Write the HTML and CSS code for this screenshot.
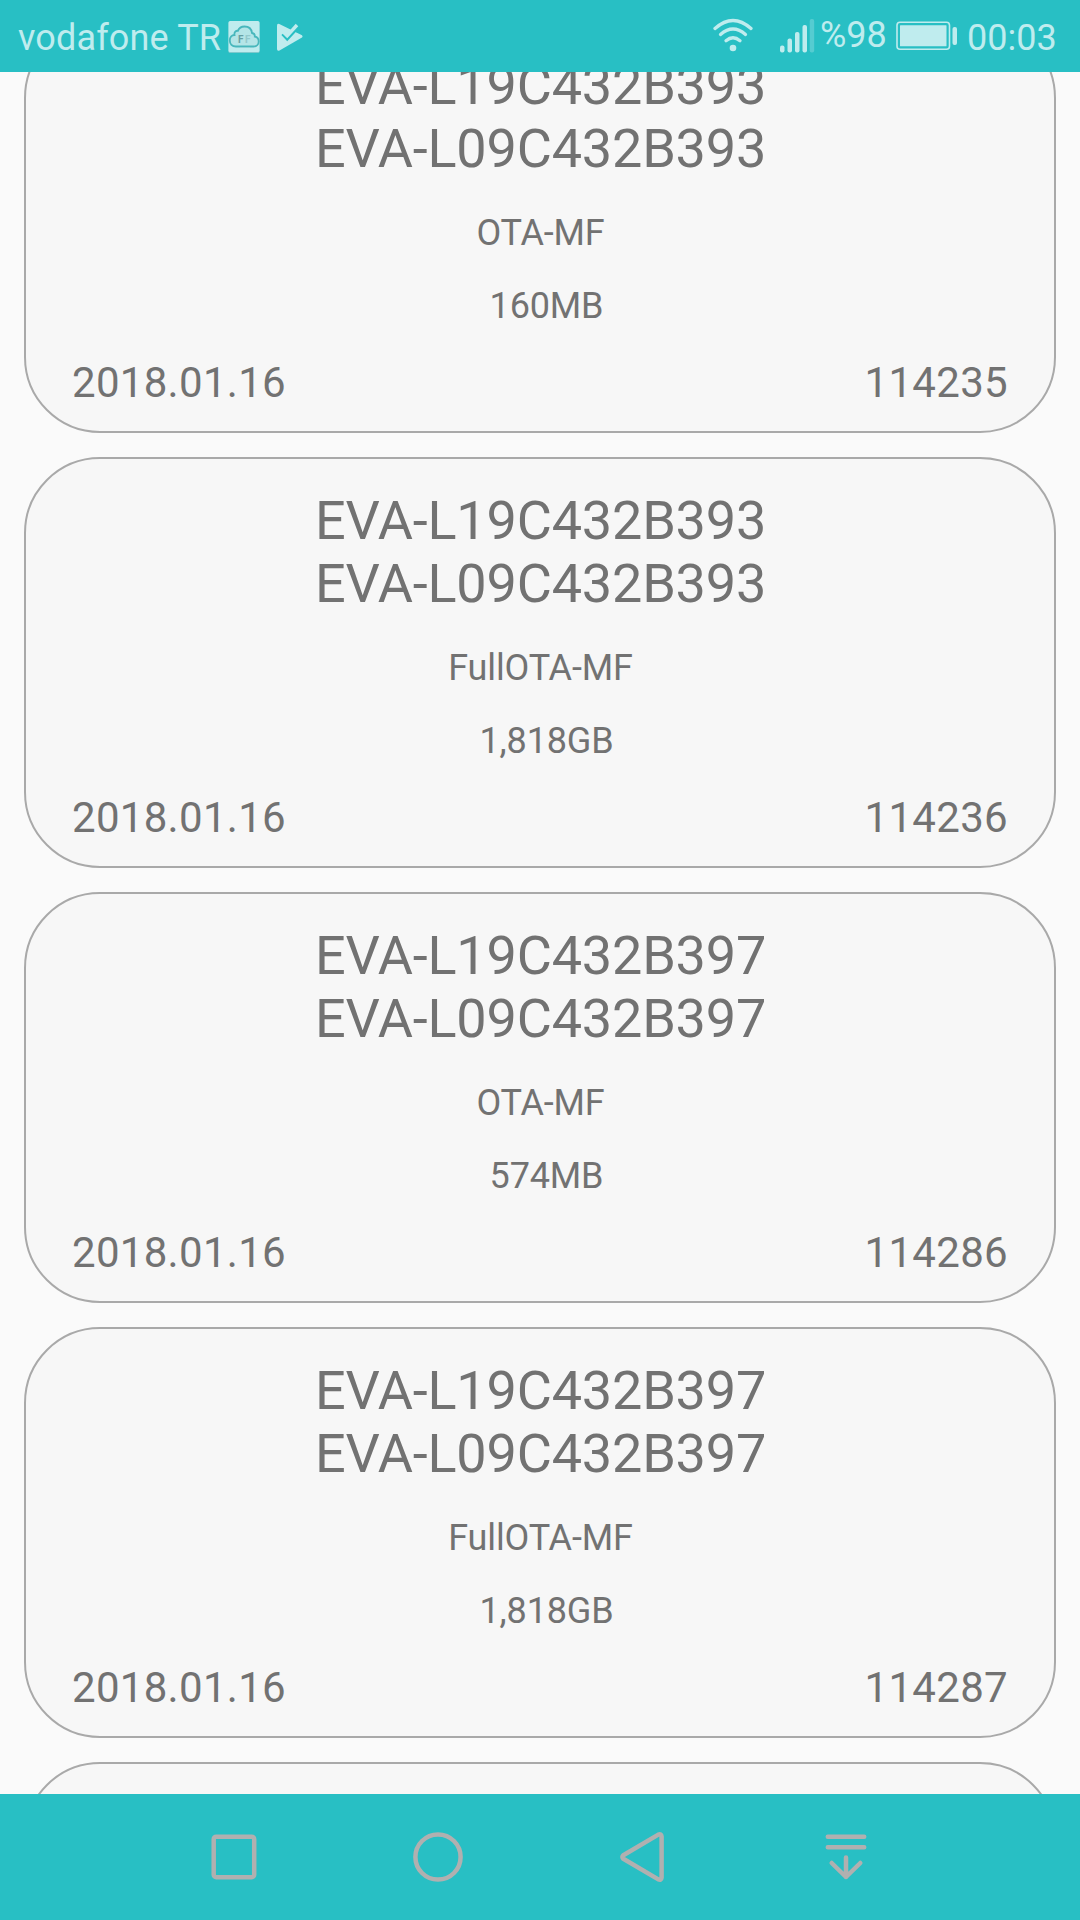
FILE: index.html
```html
<!DOCTYPE html>
<html lang="tr">
<head>
  <meta charset="UTF-8">
  <title>Firmware Finder</title>
  <link rel="stylesheet" href="styles.css">
</head>
<body>
  <div class="screen">
    <header class="status-bar">
      <span class="carrier">vodafone TR</span>
      <svg class="icon-finder" width="32" height="32" viewBox="0 0 32 32">
        <rect x="0.5" y="1" width="31" height="31" rx="1.5" fill="#7cc9cd"/>
        <rect x="0.5" y="0" width="31" height="31" rx="1.5" fill="#bfecee"/>
        <path d="M8 25.500C4 25.500 1.800 23 1.800 19.500C1.800 16 4 14 6.500 14C6 11 8 9.500 10 9.800C11 7 13.500 5.500 16.500 5.500C20.500 5.500 23.500 8 24 12C26 12.300 27 14 26.800 15.500C29.500 16 30.700 18 30.700 20.500C30.700 23.500 28.500 25.500 25.500 25.500Z" fill="#b4e5e7" stroke="#48b7bc" stroke-width="1.800"/>
        <text class="finder-letter" x="10" y="22" fill="#669fa3">F</text>
        <text class="finder-letter" x="17" y="22" fill="#93c9cc">F</text>
        <path d="M12 26.500H22" stroke="#8fd3d6" stroke-width="1"/>
      </svg>
      <svg class="icon-play" width="28" height="30" viewBox="0 0 28 30">
        <path d="M1 3.500Q1 1 3.300 2L13.500 7L26 13.200Q27.200 14.500 26 15.600L3.500 28.500Q1 29.500 1 27Z" fill="#bfecee"/>
        <path d="M15 7.500L21.500 0.500L25 8.500L22.500 11.300Z" fill="#28bfc4"/>
        <path d="M6.300 12.200L11.200 17.300L23 4.500" fill="none" stroke="#28bfc4" stroke-width="2.600"/>
        <path d="M6.500 9.200L11.200 13.800L21 3" fill="none" stroke="#bfecee" stroke-width="3.400"/>
      </svg>
      <svg class="icon-wifi" width="40" height="34" viewBox="0 0 40 34" fill="none" stroke="#bfecee" stroke-width="3.300" stroke-linecap="round">
        <path d="M2 10.500Q20 -5.500 38 10.500"/>
        <path d="M7.500 16.500Q20 5.500 32.500 16.500"/>
        <path d="M13 22.800Q20 16.800 27 22.800"/>
        <circle cx="20" cy="30" r="3.300" fill="#bfecee" stroke="none"/>
      </svg>
      <svg class="icon-signal" width="35" height="34" viewBox="0 0 35 34" fill="#bfecee">
        <rect x="0" y="26.500" width="4.500" height="7" rx="2"/>
        <rect x="7.500" y="19.500" width="4.500" height="14" rx="2"/>
        <rect x="15" y="13" width="4.500" height="20.500" rx="2"/>
        <rect x="22.500" y="6" width="4.500" height="27.500" rx="2"/>
        <rect x="29.700" y="0" width="4.500" height="33.500" rx="2" opacity="0.300"/>
      </svg>
      <span class="percent">%98</span>
      <svg class="icon-battery" width="62" height="30" viewBox="0 0 62 30">
        <rect x="1" y="1.300" width="52.500" height="27" rx="3" fill="none" stroke="#bfecee" stroke-width="1.600"/>
        <rect x="4" y="4.300" width="46.500" height="21" rx="0.500" fill="#bfecee"/>
        <rect x="56.500" y="6" width="4.500" height="18" rx="2" fill="#bfecee"/>
      </svg>
      <span class="clock">00:03</span>
    </header>

    <main class="list">
      <div class="card">
        <div class="title">EVA-L19C432B393<br>EVA-L09C432B393</div>
        <div class="type">OTA-MF</div>
        <div class="size">160MB</div>
        <div class="info"><span>2018.01.16</span><span>114235</span></div>
      </div>
      <div class="card">
        <div class="title">EVA-L19C432B393<br>EVA-L09C432B393</div>
        <div class="type">FullOTA-MF</div>
        <div class="size">1,818GB</div>
        <div class="info"><span>2018.01.16</span><span>114236</span></div>
      </div>
      <div class="card">
        <div class="title">EVA-L19C432B397<br>EVA-L09C432B397</div>
        <div class="type">OTA-MF</div>
        <div class="size">574MB</div>
        <div class="info"><span>2018.01.16</span><span>114286</span></div>
      </div>
      <div class="card">
        <div class="title">EVA-L19C432B397<br>EVA-L09C432B397</div>
        <div class="type">FullOTA-MF</div>
        <div class="size">1,818GB</div>
        <div class="info"><span>2018.01.16</span><span>114287</span></div>
      </div>
      <div class="card"></div>
    </main>

    <nav class="nav-bar">
      <a class="nav-item">
        <svg width="60" height="60" viewBox="0 0 60 60"><rect x="9.700" y="9.700" width="40.500" height="40.500" rx="2.500"/></svg>
      </a>
      <a class="nav-item">
        <svg width="60" height="60" viewBox="0 0 60 60"><circle cx="30" cy="30" r="22.600"/></svg>
      </a>
      <a class="nav-item">
        <svg width="60" height="60" viewBox="0 0 60 60"><path d="M11.300 28.200L46.300 7.600Q49.300 6.400 49.600 9.500V50.500Q49.300 53.600 46.300 52.400L11.300 31.800Q9.400 30 11.300 28.200Z"/></svg>
      </a>
      <a class="nav-item">
        <svg width="60" height="60" viewBox="0 0 60 60"><path d="M11.800 9.800H48.200M11.800 20.300H48.200M30 30.500V50M15.700 36L30 50L44.300 36"/></svg>
      </a>
    </nav>
  </div>
</body>
</html>
```
FILE: styles.css
```css
body {
  margin: 0;
  background-color: #fafafa;
  font-family: Roboto, sans-serif;
  color: #727272;
}

.screen {
  display: flex;
  flex-direction: column;
  height: 1920px;
  overflow: hidden;
}

/* Status bar */
.status-bar {
  display: flex;
  align-items: flex-start;
  box-sizing: border-box;
  flex: none;
  height: 72px;
  padding: 16px 25px 0 18px;
  background-color: #28bfc4;
  color: #bfecee;
  font-size: 36px;
  line-height: 42px;
  white-space: nowrap;
}

.status-bar svg {
  flex: none;
}

.carrier {
  width: 210px;
  margin-top: 1px;
  letter-spacing: 0.15px;
}

.icon-finder {
  margin-top: 5px;
}

.finder-letter {
  font-size: 10px;
  font-weight: bold;
}

.icon-play {
  margin: 6px 0 0 16px;
}

.icon-wifi {
  margin: 2px 0 0 auto;
}

.icon-signal {
  margin: 3px 0 0 27px;
}

.percent {
  width: 67px;
  margin: -2px 0 0 5px;
}

.icon-battery {
  margin: 5px 0 0 9px;
}

.clock {
  width: 88px;
  margin: 1px 0 0 9px;
}

/* Firmware list */
.list {
  display: flex;
  flex-direction: column;
  flex: 1;
  gap: 24px;
  min-height: 0;
  padding: 0 24px;
  overflow: hidden;
}

.card {
  box-sizing: border-box;
  flex: none;
  height: 411px;
  padding: 30px 46px 0;
  background-color: #f7f7f7;
  border: 2px solid #a9a9a9;
  border-radius: 76px;
  text-align: center;
}

/* list is scrolled a little past the first card's top */
.card:first-child {
  margin-top: -50px;
}

.title {
  padding-left: 1px;
  font-size: 54px;
  line-height: 63px;
  letter-spacing: -0.18px;
}

.type,
.size {
  margin-top: 31px;
  font-size: 36px;
  line-height: 42px;
  letter-spacing: -0.15px;
}

.type {
  margin-top: 32px;
  padding-left: 1px;
}

.size {
  padding-left: 13px;
}

.info {
  display: flex;
  justify-content: space-between;
  margin-top: 31px;
  font-size: 42px;
  line-height: 50px;
  letter-spacing: 0.3px;
}

/* Navigation bar */
.nav-bar {
  display: flex;
  align-items: center;
  justify-content: center;
  flex: none;
  height: 126px;
  background-color: #28bfc4;
}

.nav-item {
  display: flex;
  justify-content: center;
  width: 204px;
}

.nav-item svg {
  fill: none;
  stroke: #b0b0b0;
  stroke-width: 4.5px;
  stroke-linecap: round;
  stroke-linejoin: round;
}
```
